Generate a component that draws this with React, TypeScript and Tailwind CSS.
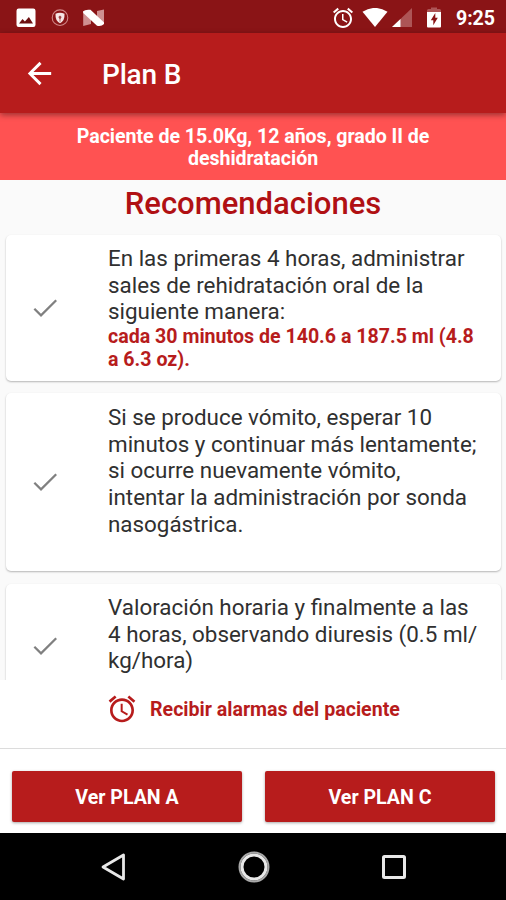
import type { ReactNode } from "react";

const ALARM =
  "M22 5.72l-4.6-3.86-1.29 1.53 4.6 3.86L22 5.72zM7.88 3.39L6.6 1.86 2 5.71l1.29 1.53 4.59-3.85zM12.5 8H11v6l4.75 2.85.75-1.23-4-2.37V8zM12 4c-4.97 0-9 4.03-9 9s4.02 9 9 9c4.97 0 9-4.03 9-9s-4.03-9-9-9zm0 16c-3.87 0-7-3.13-7-7s3.13-7 7-7 7 3.13 7 7-3.13 7-7 7z";

function Glyph({ d, className }: { d: string; className: string }) {
  return (
    <svg viewBox="0 0 24 24" fill="currentColor" className={`shrink-0 ${className}`}>
      <path d={d} />
    </svg>
  );
}

function StatusBar() {
  return (
    <header className="flex h-[33px] shrink-0 items-center bg-[#8a1416] pt-0.5 pl-4 text-white">
      <svg viewBox="0 0 20 20" className="h-5 w-5 shrink-0">
        <rect x="0.5" y="0.5" width="19" height="18.500" rx="2.2" fill="#fff" />
        <path d="M3 15.500l3.500-4.500 2.400 2.500 4-4.500L17 15.500z" fill="#6d1012" />
      </svg>
      <svg viewBox="0 0 18 18" className="ml-[15px] h-[18px] w-[18px] shrink-0">
        <circle cx="9" cy="8.700" r="7.800" fill="none" stroke="#d08788" strokeWidth="1.1" />
        <path d="M4.500 4.800Q9 2.800 13.500 4.800Q14 11.800 9 14.200Q4 11.800 4.500 4.800z" fill="#f6e6e6" />
        <path d="M9 6.400l1.600 1.600L9.400 10.200v2.500h-.8v-2.500L7.400 8z" fill="#a04648" />
      </svg>
      <svg viewBox="0 0 22 18" className="ml-[14px] h-[18px] w-[22px] shrink-0">
        <path d="M0.200 2L8 5v10l-7.800 2zM14 2L21 .5v14.500L14 16z" fill="#cf9091" />
        <path d="M0.200 4V2.200Q2 .2 7.500 .8L21 13.500V15Q18.500 17.800 14 16.800z" fill="#fff" />
      </svg>
      <Glyph d={ALARM} className="ml-[226px] h-6 w-6" />
      <svg viewBox="0 0 26 20" className="ml-[7px] h-5 w-[26px] shrink-0">
        <path d="M0.500 3.800Q13-4 25.500 3.800L13 19z" fill="#fff" />
      </svg>
      <svg viewBox="0 0 20 20" className="ml-1 h-5 w-5 shrink-0">
        <path d="M20 0v19H0z" fill="#ad5556" />
        <path d="M8.500 11V19H0z" fill="#fff" />
      </svg>
      <svg viewBox="0 0 14 21" className="ml-[15px] h-[21px] w-[14px] shrink-0">
        <path d="M0 5V3.500Q0 2 1.500 2H4V.5h6V2h2.500Q14 2 14 3.500V5z" fill="#ad5556" />
        <path d="M0 5h14v14.500q0 1-1 1H1q-1 0-1-1z" fill="#fff" />
        <path d="M8.300 6L3.800 13.300h2.500v5l4.500-7.600H8.300z" fill="#8a1416" />
      </svg>
      <span className="ml-[15px] pt-0.5 text-[19.600px] leading-none font-bold tracking-[-0.100px]">9:25</span>
    </header>
  );
}

function Card({ className, children }: { className: string; children: ReactNode }) {
  return (
    <article
      className={`mr-[5px] ml-[6px] flex shrink-0 rounded-[5px] bg-white shadow-[0_1px_2px_rgba(0,0,0,0.28)] ${className}`}
    >
      <div className="flex w-[102px] shrink-0 items-center pl-[23px]">
        <Glyph
          d="M9 16.400L4.600 12l-1.200 1.200L9 18.800 21 6.800l-1.200-1.200z"
          className="h-8 w-8 text-[#808080]"
        />
      </div>
      <div className="text-[22.400px] leading-[26.700px] font-normal whitespace-nowrap text-[#303030]">
        {children}
      </div>
    </article>
  );
}

function PlanButton({ children }: { children: ReactNode }) {
  return (
    <button className="h-[51px] w-[230px] rounded-[2px] bg-[#b71c1c] pt-0.5 text-[19.600px] font-bold text-white shadow-[0_1px_3px_rgba(0,0,0,0.35)]">
      {children}
    </button>
  );
}

export default function App() {
  return (
    <div className="flex h-[900px] w-[506px] flex-col overflow-hidden bg-[#fafafa] font-[Roboto,sans-serif]">
      <StatusBar />
      <div className="relative flex h-20 shrink-0 items-center bg-[#b71c1c] pl-[22px] text-white shadow-[0_2px_6px_rgba(0,0,0,0.4)]">
        <Glyph
          d="M20 11H7.830l5.590-5.590L12 4l-8 8 8 8 1.410-1.410L7.830 13H20v-2z"
          className="h-[35px] w-[35px]"
        />
        <h1 className="ml-[45px] pt-1 text-[28px] leading-none font-medium tracking-[-0.200px]">Plan B</h1>
      </div>
      <div className="h-[67px] shrink-0 bg-[#ff5252] pt-[12.500px] text-center text-[19.600px] leading-[22.500px] font-bold tracking-[-0.040px] text-white">
        <div>Paciente de 15.0Kg, 12 años, grado II de</div>
        <div>deshidratación</div>
      </div>
      <main className="flex h-[500px] shrink-0 flex-col overflow-hidden">
        <h2 className="h-[55px] shrink-0 pt-[5px] text-center text-[31px] leading-[37px] font-medium text-[#b01013]">
          Recomendaciones
        </h2>
        <Card className="h-[146px] pt-2.5 *:first:-mt-2.5">
          <div>En las primeras 4 horas, administrar</div>
          <div>sales de rehidratación oral de la</div>
          <div>siguiente manera:</div>
          <div className="mt-px text-[19.600px] leading-[22.500px] font-bold text-[#b71c1c]">
            <div>cada 30 minutos de 140.6 a 187.5 ml (4.8</div>
            <div>a 6.3 oz).</div>
          </div>
        </Card>
        <Card className="mt-[12px] h-[178px] pt-[11px] *:first:-mt-[11px]">
          <div>Si se produce vómito, esperar 10</div>
          <div>minutos y continuar más lentamente;</div>
          <div>si ocurre nuevamente vómito,</div>
          <div>intentar la administración por sonda</div>
          <div>nasogástrica.</div>
        </Card>
        <Card className="mt-[13px] h-[124px] pt-2.5 *:first:-mt-2.5">
          <div>Valoración horaria y finalmente a las</div>
          <div>4 horas, observando diuresis (0.5 ml/</div>
          <div>kg/hora)</div>
        </Card>
      </main>
      <section className="flex h-[69px] shrink-0 border-b border-[#dcdcdc] bg-white pt-[13px] pl-[106px] text-[#b71c1c]">
        <Glyph d={ALARM} className="h-8 w-8" />
        <span className="ml-3 text-[19.600px] leading-[33px] font-bold whitespace-nowrap">
          Recibir alarmas del paciente
        </span>
      </section>
      <section className="flex h-[84px] shrink-0 gap-[23px] bg-white pt-[22px] pl-3">
        <PlanButton>Ver PLAN A</PlanButton>
        <PlanButton>Ver PLAN C</PlanButton>
      </section>
      <nav className="flex h-[67px] shrink-0 items-center bg-black pl-[100px] text-[#e8e8e8]">
        <svg viewBox="0 0 26 28" className="h-7 w-[26px]">
          <path d="M3 14L23.500 2v24z" fill="none" stroke="currentColor" strokeWidth="2.800" strokeLinejoin="round" />
        </svg>
        <svg viewBox="0 0 32 32" className="ml-[112px] h-8 w-8">
          <circle cx="16" cy="16" r="14.500" fill="none" stroke="#a8a8a8" strokeWidth="2" />
          <circle cx="16" cy="16" r="12" fill="none" stroke="currentColor" strokeWidth="3" />
        </svg>
        <svg viewBox="0 0 24 24" className="ml-[112px] h-6 w-6">
          <rect x="1.500" y="1.500" width="21" height="21" rx="1" fill="none" stroke="currentColor" strokeWidth="3" />
        </svg>
      </nav>
    </div>
  );
}
